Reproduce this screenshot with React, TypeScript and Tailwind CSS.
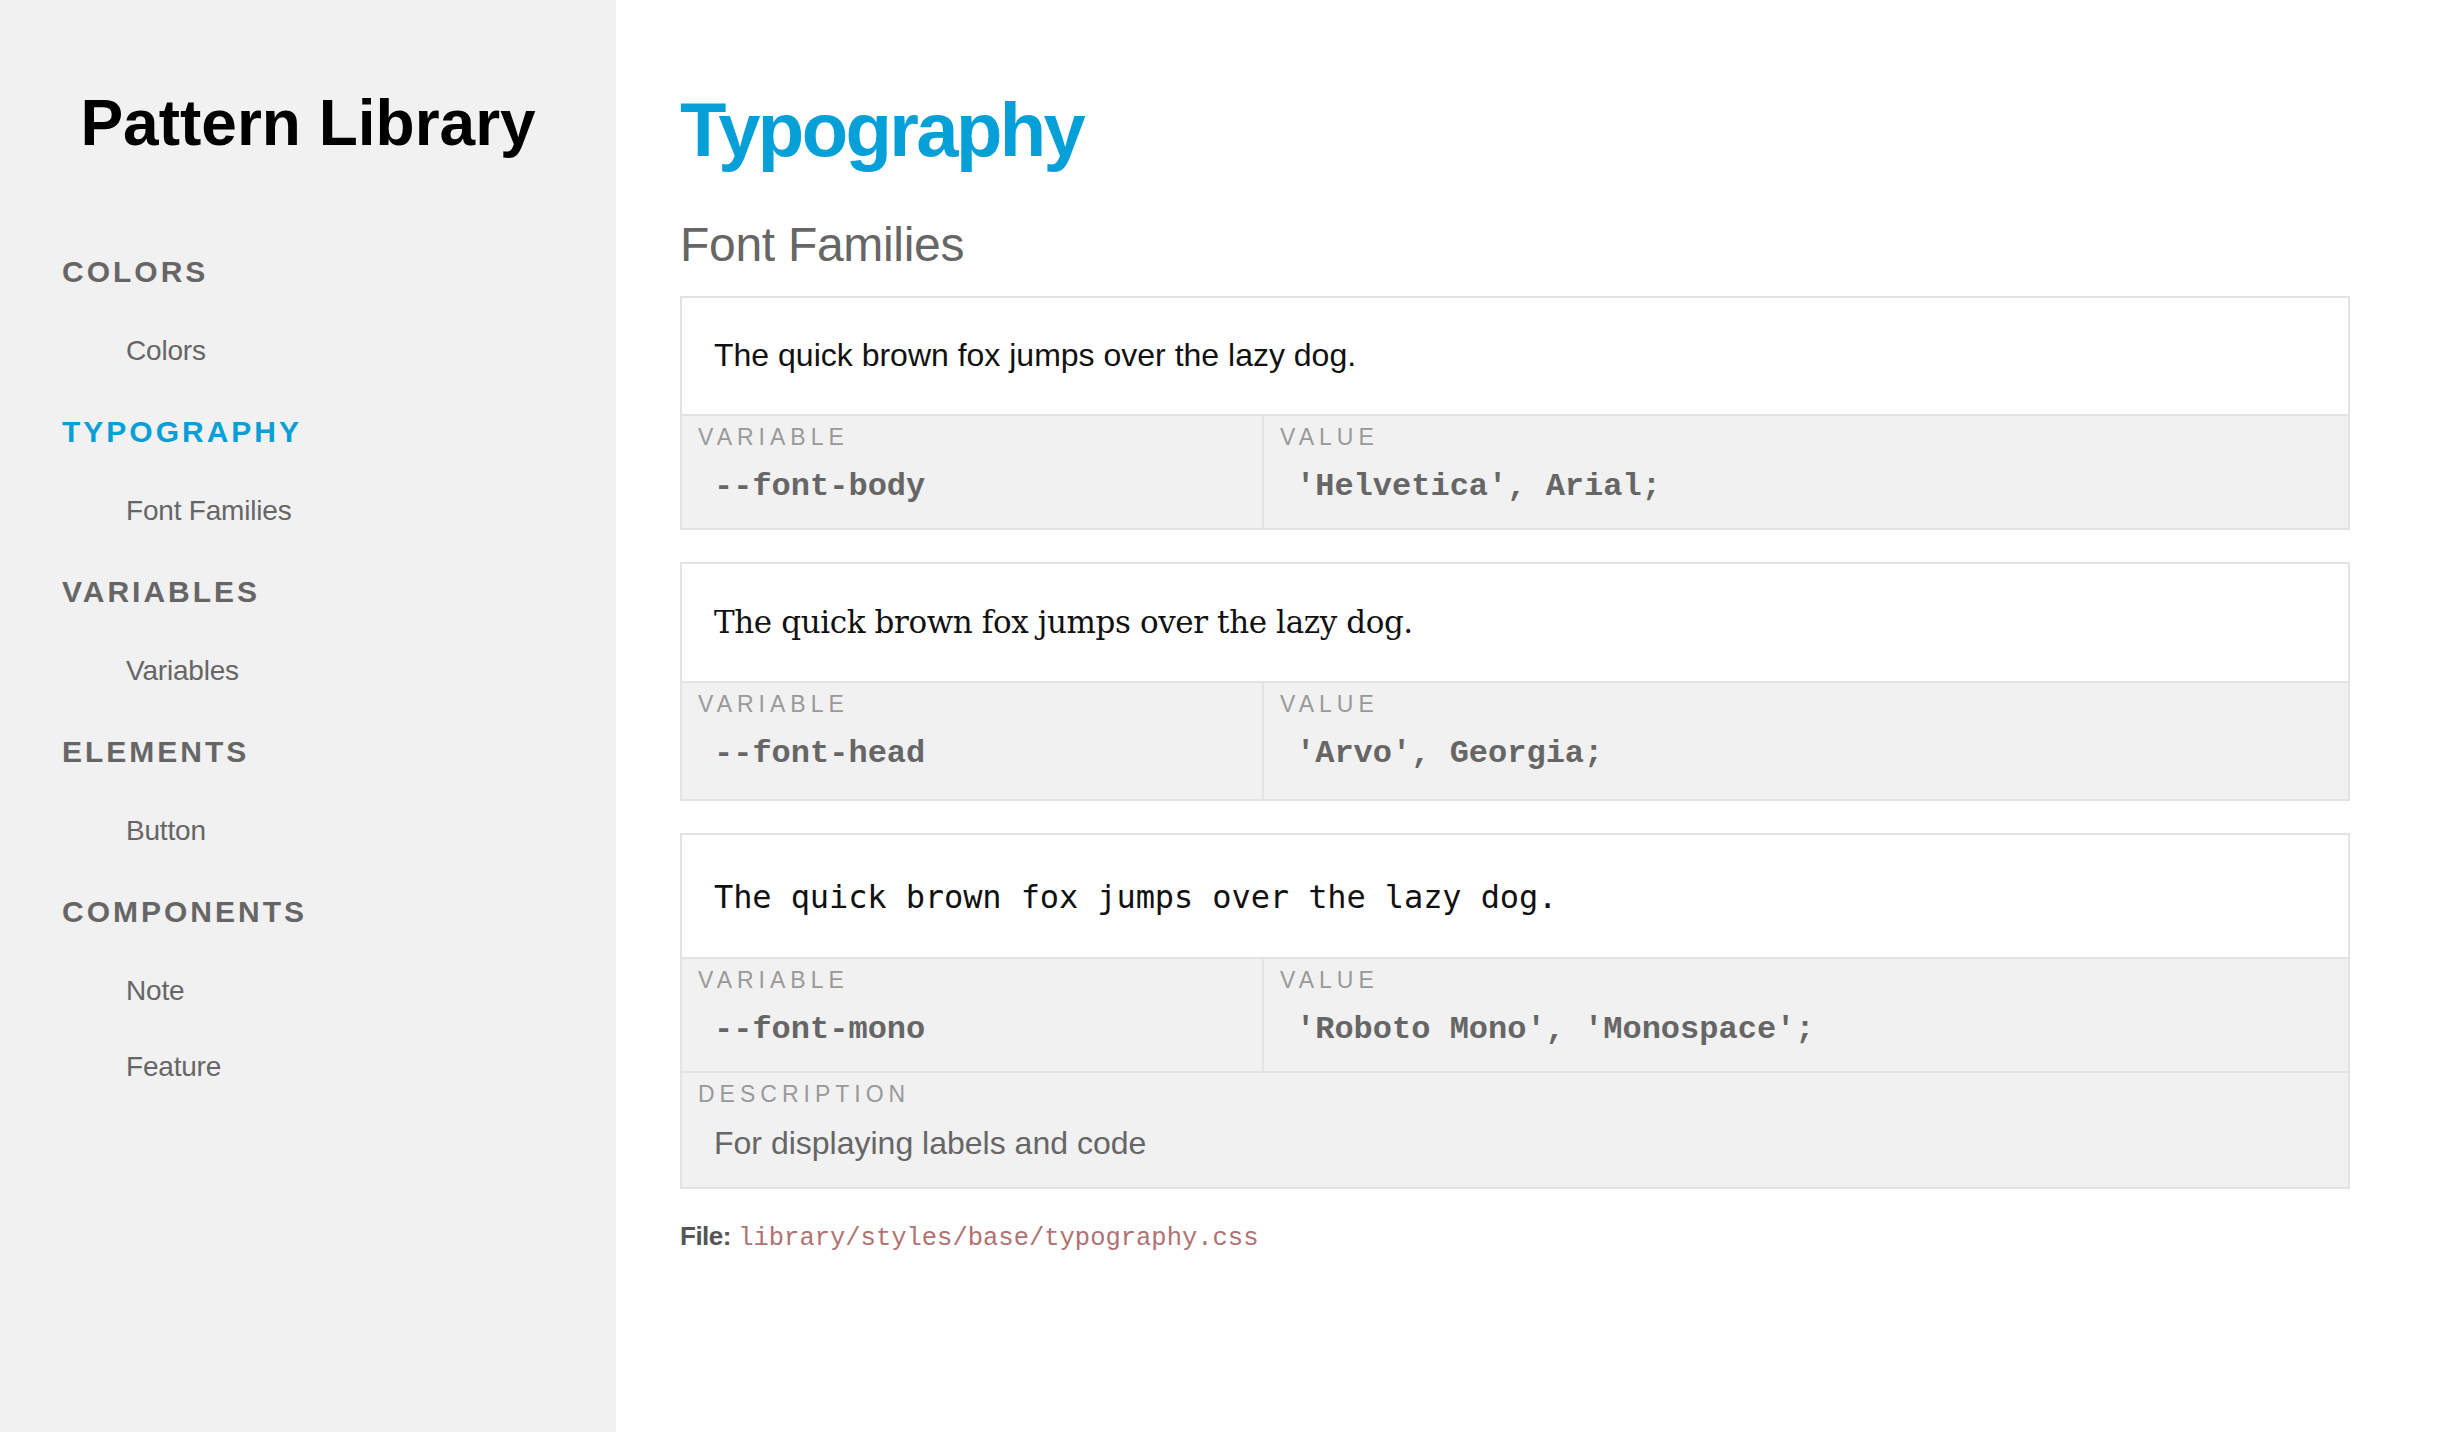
import React from 'react';

const nav = [
  { title: 'Colors', items: ['Colors'] },
  { title: 'Typography', items: ['Font Families'], active: true },
  { title: 'Variables', items: ['Variables'] },
  { title: 'Elements', items: ['Button'] },
  { title: 'Components', items: ['Note', 'Feature'] },
];

const fonts = [
  {
    sampleClass: "font-['Liberation_Sans',Arial,sans-serif] text-[32px] pt-[39px] pb-[40px]",
    rowPad: 'pb-[25px]',
    variable: '--font-body',
    value: "'Helvetica', Arial;",
  },
  {
    sampleClass: "font-['DejaVu_Serif',serif] text-[31px] tracking-[-0.4px] pt-[40px] pb-[41px]",
    rowPad: 'pb-[29px]',
    variable: '--font-head',
    value: "'Arvo', Georgia;",
  },
  {
    sampleClass: "font-['DejaVu_Sans_Mono',monospace] text-[32px] tracking-[-0.1px] pt-[43px] pb-[41px]",
    rowPad: 'pb-[25px]',
    variable: '--font-mono',
    value: "'Roboto Mono', 'Monospace';",
    description: 'For displaying labels and code',
  },
];

const Label = ({ children }: { children: React.ReactNode }) => (
  <div className="text-[23px] leading-[23px] tracking-[5px] uppercase text-[#999]">{children}</div>
);

const Sidebar = () => (
  <aside className="w-[616px] shrink-0 bg-[#f1f1f1] pt-[91px]">
    <h1 className="text-center text-[64px] leading-[64px] font-bold text-black">Pattern Library</h1>
    <nav className="mt-[102px] pl-[62px]">
      {nav.map((group, i) => (
        <div key={group.title} className={i === 0 ? '' : 'mt-[52px]'}>
          <div
            className={`text-[30px] leading-[30px] font-bold uppercase tracking-[3px] ${
              group.active ? 'text-[#079fd6]' : 'text-[#666]'
            }`}
          >
            {group.title}
          </div>
          {group.items.map((item, j) => (
            <div
              key={item}
              className={`pl-[64px] text-[28px] leading-[28px] tracking-[-0.2px] text-[#666] ${
                j === 0 ? 'mt-[50px]' : 'mt-[48px]'
              }`}
            >
              {item}
            </div>
          ))}
        </div>
      ))}
    </nav>
  </aside>
);

const FontCard = ({ font }: { font: (typeof fonts)[number] }) => (
  <div className="border-2 border-[#e3e3e3] bg-white">
    <div className={`px-[32px] leading-[normal] text-[#111] ${font.sampleClass}`}>
      The quick brown fox jumps over the lazy dog.
    </div>
    <div className="flex border-t-2 border-[#e3e3e3] bg-[#f1f1f1]">
      <div className={`w-[580px] shrink-0 px-[16px] pt-[10px] ${font.rowPad}`}>
        <Label>Variable</Label>
        <div className="mt-[22px] pl-[16px] font-['Liberation_Mono',monospace] text-[32px] leading-[32px] font-bold text-[#666]">
          {font.variable}
        </div>
      </div>
      <div className={`flex-1 border-l-2 border-[#e3e3e3] px-[16px] pt-[10px] ${font.rowPad}`}>
        <Label>Value</Label>
        <div className="mt-[22px] pl-[16px] font-['Liberation_Mono',monospace] text-[32px] leading-[32px] font-bold text-[#666] whitespace-pre">
          {font.value}
        </div>
      </div>
    </div>
    {font.description && (
      <div className="border-t-2 border-[#e3e3e3] bg-[#f1f1f1] px-[16px] pt-[10px] pb-[28px]">
        <Label>Description</Label>
        <div className="mt-[21px] pl-[16px] text-[32px] leading-[32px] text-[#666]">{font.description}</div>
      </div>
    )}
  </div>
);

export default function App() {
  return (
    <div className="flex min-h-screen font-['Liberation_Sans',Arial,sans-serif] bg-white">
      <Sidebar />
      <main className="flex-1 pl-[64px] pr-[106px] pt-[92px]">
        <h1 className="text-[76px] leading-[76px] font-bold tracking-[-2.6px] text-[#05a0d8]">Typography</h1>
        <h2 className="mt-[53px] text-[48px] leading-[48px] tracking-[-0.3px] text-[#666]">Font Families</h2>
        <div className="mt-[27px] flex flex-col gap-[32px]">
          {fonts.map((font) => (
            <FontCard key={font.variable} font={font} />
          ))}
        </div>
        <p className="mt-[34px] text-[26px] leading-[26px] text-[#555]">
          <span className="font-bold tracking-[-0.5px]">File:</span>{' '}
          <span className="font-['Liberation_Mono',monospace] text-[25.5px] text-[#b07272]">
            library/styles/base/typography.css
          </span>
        </p>
      </main>
    </div>
  );
}
